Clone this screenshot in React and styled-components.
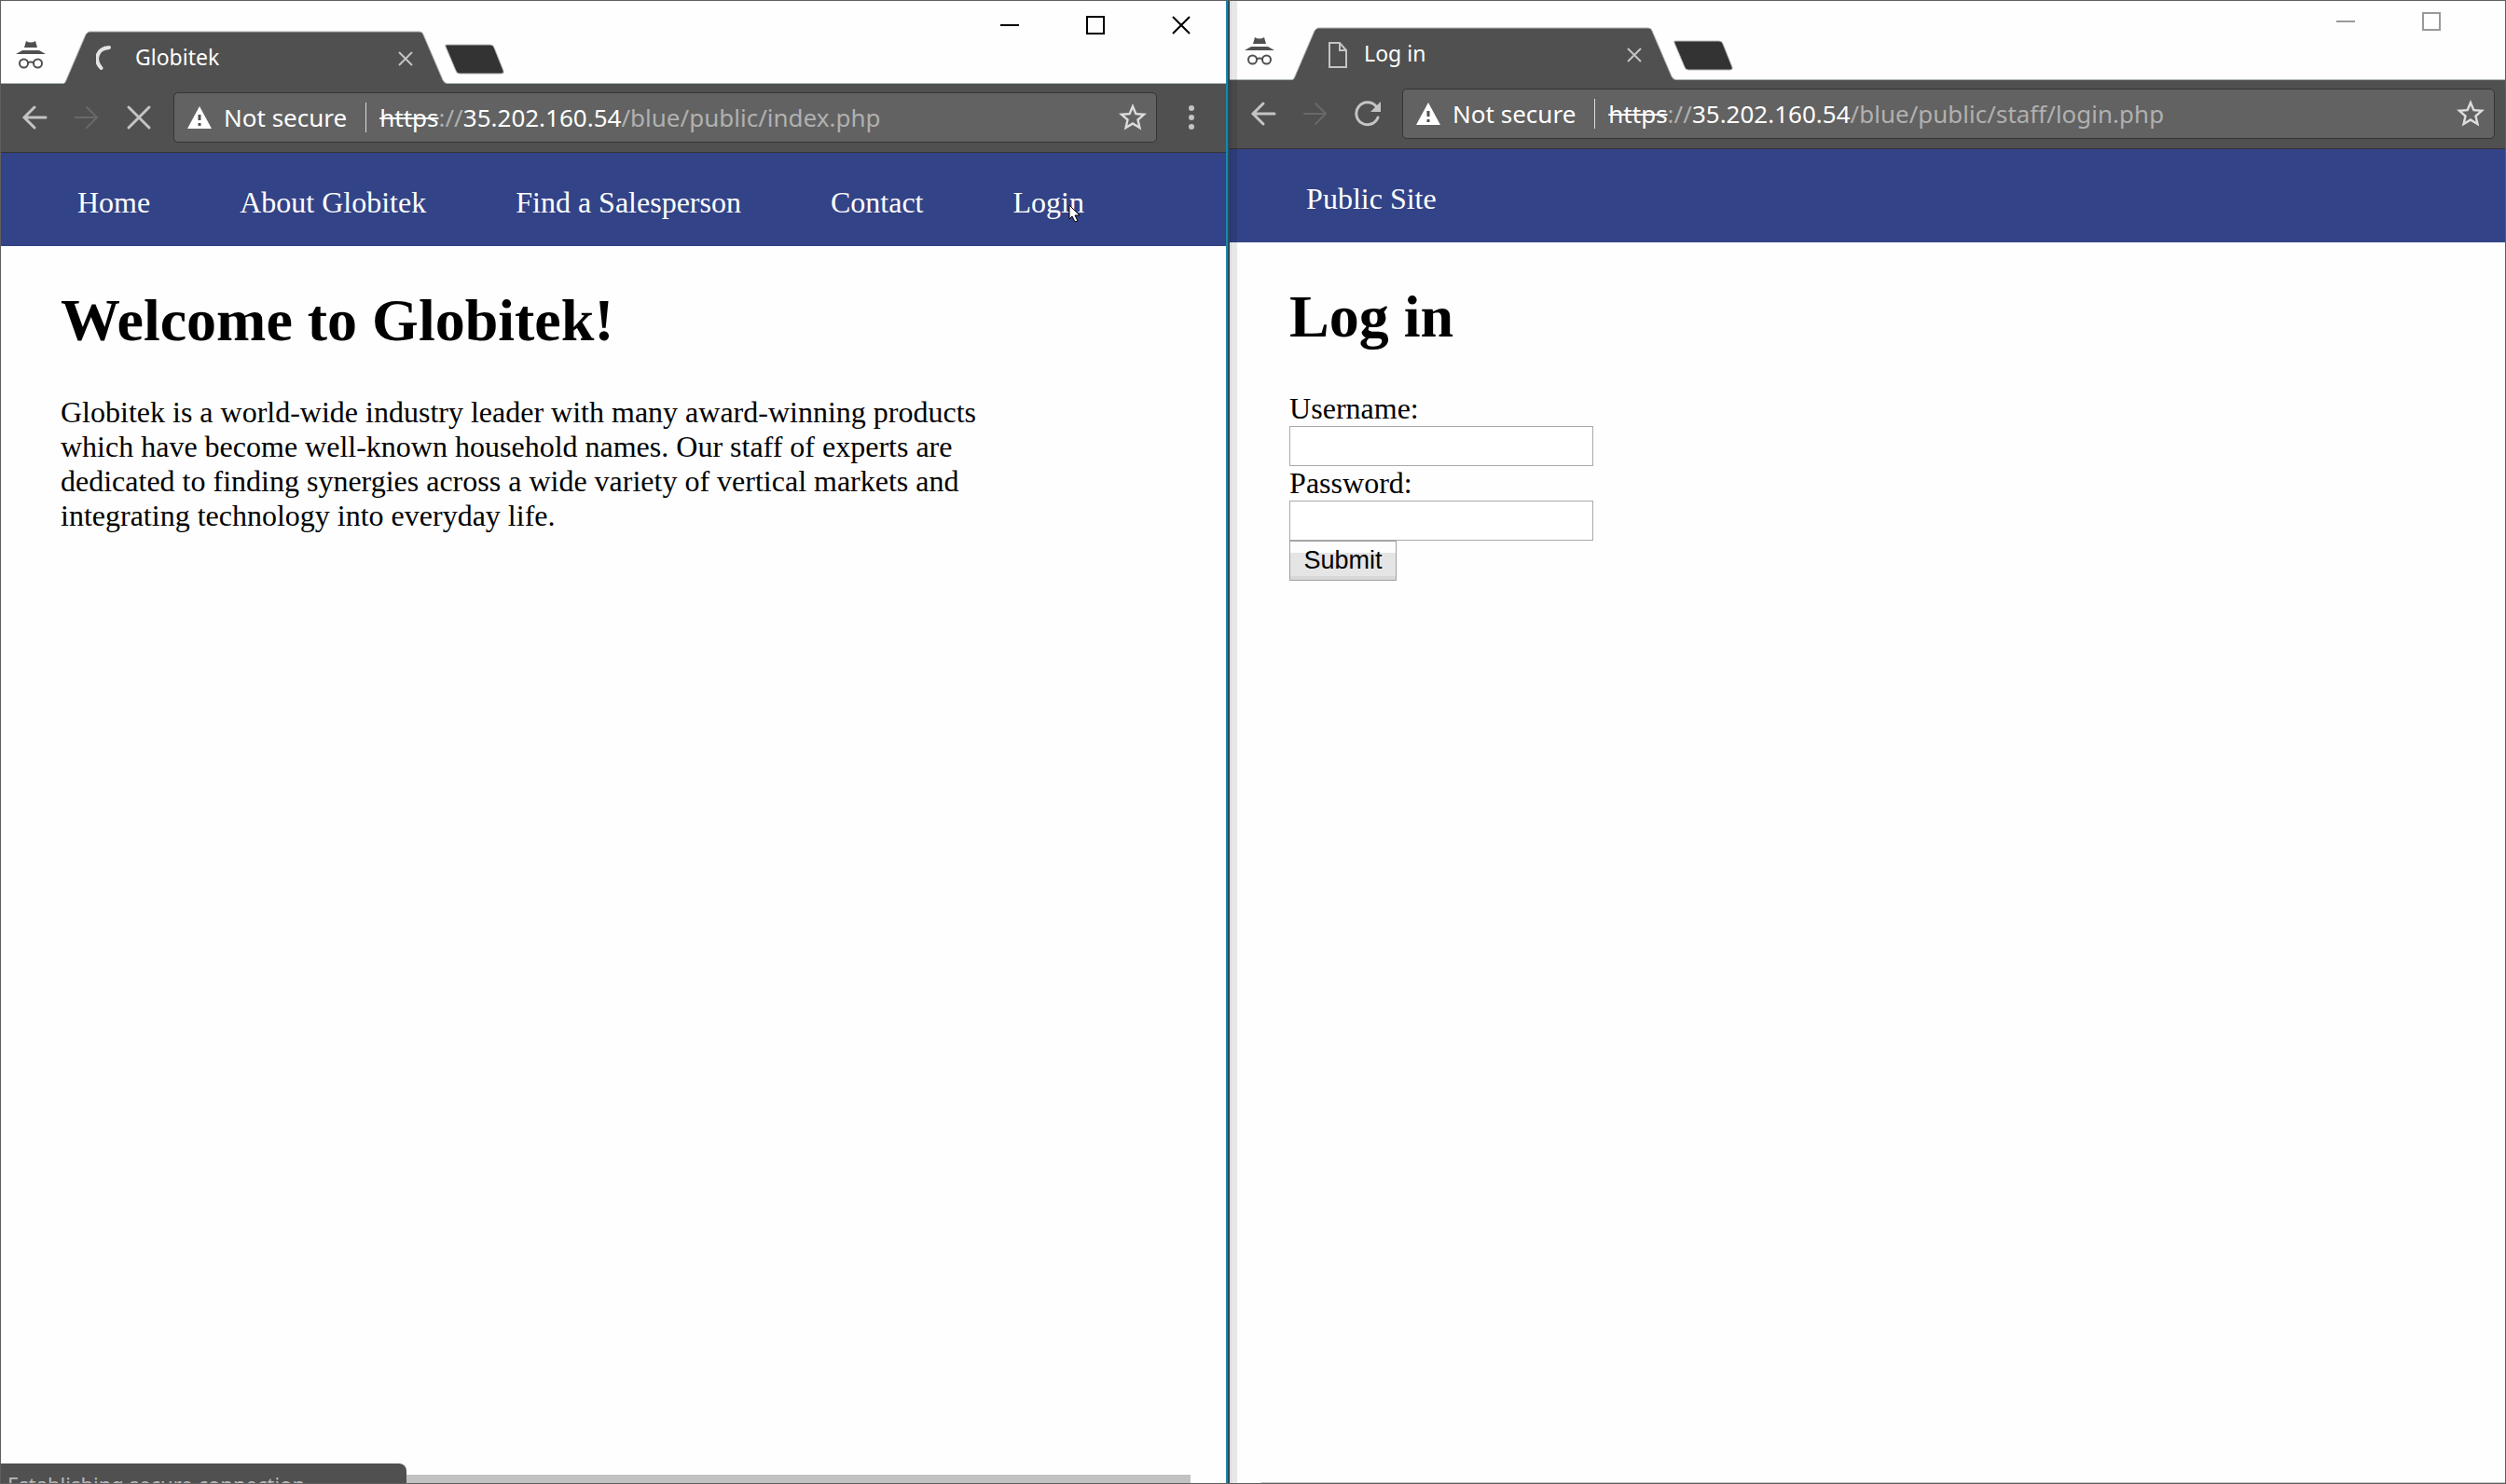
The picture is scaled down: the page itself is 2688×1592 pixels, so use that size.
import React from 'react';
import styled, { createGlobalStyle, css } from 'styled-components';

const UI = '"Noto Sans", "Open Sans", sans-serif';
const SERIF = '"Liberation Serif", "Times New Roman", serif';

const GlobalStyle = createGlobalStyle`
  *, *::before, *::after { box-sizing: border-box; }
  body { margin: 0; background: #fefefe; font-family: ${SERIF}; font-size: 32px; line-height: 37px; color: #000; overflow: hidden; }
`;

const Desktop = styled.div`
  display: grid;
  grid-template-columns: 49fr 51fr;
  height: 100vh;
  border-top: 1px solid #5f5f5f;
  border-bottom: 1px solid #5f5f5f;
`;

const Window = styled.section`
  position: relative;
  display: flex;
  flex-direction: column;
  min-width: 0;
  min-height: 0;
  background: #fefefe;
  ${({ $active }) => $active ? css`
    border-left: 1px solid #5f5f5f;
    border-right: 2px solid #1a87ab;
  ` : css`
    border-left: 2px solid #244c5c;
    border-right: 1px solid #5f5f5f;
  `}
`;

const EdgeShadow = styled.div`
  position: absolute;
  left: 0;
  top: 0;
  bottom: 0;
  width: 8px;
  background: rgba(0, 0, 0, 0.09);
  border-left: 2px solid rgba(0, 0, 0, 0.05);
`;

const TabStrip = styled.header`
  display: flex;
  height: ${({ $active }) => ($active ? 89 : 85)}px;
  align-items: flex-end;
  background: linear-gradient(#aab4b0, #aab4b0) bottom / 100% 1px no-repeat;
`;

const IncognitoBadge = styled.svg`
  width: 34px;
  height: 32px;
  margin: 0 18px 15px 15px;
  flex: none;
`;

const Tab = styled.div`
  position: relative;
  display: flex;
  align-items: center;
  width: 412px;
  height: 57px;
  padding: 2px 37px 0 35px;
  color: #fff;
  font: 23px/32px ${UI};
`;

const TabShape = styled.svg`
  position: absolute;
  inset: 0;
  width: 100%;
  height: 100%;
`;

const TabIcon = styled.svg`
  position: relative;
  width: 24px;
  height: 30px;
  margin-right: 18px;
  flex: none;
`;

const TabTitle = styled.span`
  position: relative;
  flex: 1;
  padding-bottom: 3px;
`;

const IconButton = styled.button`
  position: relative;
  display: flex;
  align-items: center;
  justify-content: center;
  width: ${({ $w }) => $w}px;
  height: ${({ $h }) => $h || 28}px;
  padding: 0;
  border: 0;
  background: none;
  flex: none;
`;

const NewTab = styled(IconButton)`
  margin: 0 auto 10px -5px;
`;

const Controls = styled.div`
  display: flex;
  align-self: flex-start;
  padding-right: ${({ $active }) => ($active ? 2 : 0)}px;
`;

const Toolbar = styled.div`
  display: flex;
  align-items: center;
  height: 74px;
  padding: 0 ${({ $menu }) => ($menu ? 0 : 11)}px 2px 8px;
  background: #505050;
  border-bottom: 1px solid #333;
`;

const Omnibox = styled.div`
  display: flex;
  flex: 1;
  align-items: center;
  height: 54px;
  min-width: 0;
  margin-left: 9px;
  padding: 0 7px 0 14px;
  background: #626262;
  border: 1px solid #343434;
  border-radius: 5px;
  color: #fff;
  font: 26px/38px ${UI};
`;

const Warning = styled.svg`
  width: 26px;
  height: 24px;
  margin-right: 13px;
  flex: none;
`;

const Security = styled.span`
  padding-right: 20px;
  white-space: nowrap;
`;

const Url = styled.span`
  flex: 1;
  padding-left: 15px;
  color: #b0b0b0;
  white-space: nowrap;
  background: linear-gradient(#dcdcdc, #dcdcdc) left / 1px 32px no-repeat;
  b { font-weight: 400; color: #fff; }
  s { color: #fff; text-decoration-thickness: 2px; }
`;

const Nav = styled.nav`
  background: #334387;
  height: 100px;
  padding: 6px 82px 0;
  display: flex;
  align-items: center;
  gap: 96px;
  a { color: #fff; text-decoration: none; white-space: nowrap; }
`;

const NavTarget = styled.span`
  position: relative;
  display: flex;
`;

const Pointer = styled.svg`
  position: absolute;
  left: 60px;
  top: 20px;
  width: 14px;
  height: 20px;
`;

const Content = styled.main`
  flex: 1;
  padding: 43px 64px 0;
`;

const Title = styled.h1`
  margin: 0 0 43px;
  font-size: 64px;
  line-height: 74px;
  white-space: nowrap;
`;

const Intro = styled.p`
  margin: 0;
  max-width: 1000px;
`;

const Form = styled.form`
  display: flex;
  flex-direction: column;
  align-items: flex-start;
`;

const Field = styled.input`
  width: 326px;
  height: 43px;
  border: 1px solid #a9a9a9;
  border-radius: 0;
  background: #fff;
  padding: 2px 4px;
  font: 27px "Liberation Sans", Arial, sans-serif;
`;

const Submit = styled.button`
  width: 115px;
  height: 43px;
  padding: 0 0 1px;
  border: 1px solid #a0a0a0;
  border-radius: 0;
  background: linear-gradient(#fdfdfd 12px, #e5e5e5 12px, #e5e5e5 37px, #d8d8d8 37px);
  font: 27px/32px "Liberation Sans", Arial, sans-serif;
  color: #000;
`;

const Bottom = styled.footer`
  display: flex;
  align-items: flex-end;
  overflow: hidden;
  height: ${({ $h }) => $h}px;
`;

const Status = styled.output`
  width: 435px;
  height: 21px;
  padding: 6px 7px 0;
  overflow: hidden;
  background: #505050;
  border-top-right-radius: 8px;
  color: #b8b8b8;
  font: 22px/32px ${UI};
  white-space: nowrap;
`;

const ScrollThumb = styled.div`
  flex: 1;
  height: 9px;
  margin-right: 38px;
  background: #c1c1c1;
`;

const ThinThumb = styled(ScrollThumb)`
  height: 1px;
  margin: 0 0 0 34px;
`;

function Incognito() {
  return (
    <IncognitoBadge viewBox="0 0 34 32" aria-hidden="true">
      <path d="M12 1q5 3 10 0l2 7H10zM1 15l7-4h18l7 4z" fill="#505050" />
      <g fill="none" stroke="#505050" strokeWidth="2">
        <circle cx="9.500" cy="25" r="4.500" /><circle cx="24.500" cy="25" r="4.500" />
        <path d="M14 24q3-1 6 0" />
      </g>
    </IncognitoBadge>
  );
}

function Chrome({ active, title, url, loading, menu, children }) {
  const ctl = active ? '#000' : '#999';
  const controlHeight = active ? 52 : 44;
  return (
    <Window $active={active}>
      <TabStrip $active={active}>
        <Incognito />
        <Tab>
          <TabShape viewBox="0 0 412 57" preserveAspectRatio="none" aria-hidden="true">
            <path d="M0 57C2 56 2 55 3 53L24 4Q26 1 28 1H382Q385 1 386 4L407 53Q409 57 412 57Z" fill="#505050" />
            <path d="M0 56.500C2 56 2 55 3 53L24 4Q26 1 28 1H382Q385 1 386 4L407 53Q409 56.500 412 56.500" fill="none" stroke="#aab4b0" />
          </TabShape>
          <TabIcon viewBox="0 0 24 30" aria-hidden="true">
            {loading
              ? <path d="M14 3C0 4-2 17 5.500 25" fill="none" stroke="#e4e4e4" strokeWidth="4" strokeLinecap="round" />
              : <path d="M5 2h11l7 8v18H5zM16 2v8h7" fill="none" stroke="#c4c4c4" strokeWidth="2" />}
          </TabIcon>
          <TabTitle>{title}</TabTitle>
          <IconButton $w={16} aria-label="Close tab">
            <svg width="16" height="18" viewBox="0 0 16 18"><path d="M1 2l14 14M15 2L1 16" stroke="#c4c4c4" strokeWidth="2" /></svg>
          </IconButton>
        </Tab>
        <NewTab $w={68} $h={34} aria-label="New tab">
          <svg width="68" height="34" viewBox="0 0 68 34">
            <path d="M4 2h47q3 0 4 3l10 25q1 3-2 3H18q-3 0-4-3L3 4q-1-2 1-2z" fill="#333" stroke="#b8b8b8" />
          </svg>
        </NewTab>
        <Controls $active={active}>
          <IconButton $w={92} $h={controlHeight} aria-label="Minimize">
            <svg width="20" height="20"><path d="M0 10h20" stroke={ctl} strokeWidth="2" /></svg>
          </IconButton>
          <IconButton $w={92} $h={controlHeight} aria-label="Maximize">
            <svg width="20" height="20"><path d="M1 1h18v18H1z" fill="none" stroke={ctl} strokeWidth="2" /></svg>
          </IconButton>
          <IconButton $w={active ? 92 : 33} $h={controlHeight} aria-label="Close">
            {active && <svg width="20" height="20"><path d="M1 1l18 18M19 1L1 19" stroke={ctl} strokeWidth="2" /></svg>}
          </IconButton>
        </Controls>
      </TabStrip>
      <Toolbar $menu={menu}>
        <IconButton $w={56} aria-label="Back">
          <svg width="28" height="28"><path d="M26 14H4M14 3L3 14l11 11" fill="none" stroke="#c4c4c4" strokeWidth="3" strokeLinecap="round" /></svg>
        </IconButton>
        <IconButton $w={56} aria-label="Forward">
          <svg width="28" height="28"><path d="M2 14h22M14 3l11 11-11 11" fill="none" stroke="#696969" strokeWidth="2" strokeLinecap="round" /></svg>
        </IconButton>
        <IconButton $w={56} aria-label={loading ? 'Stop' : 'Reload'}>
          {loading
            ? <svg width="28" height="28"><path d="M3 3l22 22M25 3L3 25" stroke="#c4c4c4" strokeWidth="3" strokeLinecap="round" /></svg>
            : <svg width="28" height="28"><path d="M23 6A12 12 0 1 0 25 18" fill="none" stroke="#c4c4c4" strokeWidth="3" strokeLinecap="round" /><path d="M28 1v11H17z" fill="#c4c4c4" /></svg>}
        </IconButton>
        <Omnibox>
          <Warning viewBox="0 0 26 24" aria-hidden="true">
            <path d="M13 0l13 24H0z" fill="#fff" /><path d="M13 9v6M13 18v3" stroke="#505050" strokeWidth="3" />
          </Warning>
          <Security>Not secure</Security>
          <Url><s>https</s>://<b>35.202.160.54</b>{url}</Url>
          <IconButton $w={36} $h={36} aria-label="Bookmark">
            <svg width="36" height="36" viewBox="0 0 24 24"><path d="M22 9.240l-7.190-.620L12 2 9.190 8.630 2 9.240l5.460 4.730L5.820 21 12 17.270 18.180 21l-1.630-7.030zM12 15.400l-3.760 2.270 1-4.280-3.320-2.880 4.380-.380L12 6.100l1.710 4.040 4.380.380-3.320 2.880 1 4.280z" fill="#dcdcdc" /></svg>
          </IconButton>
        </Omnibox>
        {menu && (
          <IconButton $w={74} $h={30} aria-label="Menu">
            <svg width="8" height="28"><g fill="#c4c4c4"><circle cx="4" cy="4" r="3" /><circle cx="4" cy="14" r="3" /><circle cx="4" cy="24" r="3" /></g></svg>
          </IconButton>
        )}
      </Toolbar>
      {children}
    </Window>
  );
}

export default function App() {
  return (
    <Desktop>
      <GlobalStyle />
      <Chrome active loading menu title="Globitek" url="/blue/public/index.php">
        <Nav>
          <a href="#home">Home</a>
          <a href="#about">About Globitek</a>
          <a href="#find">Find a Salesperson</a>
          <a href="#contact">Contact</a>
          <NavTarget>
            <a href="#login">Login</a>
            <Pointer viewBox="0 0 14 20" aria-hidden="true">
              <path d="M1 1v15l3-3 3 6 3-1-3-6h5z" fill="#fff" stroke="#000" />
            </Pointer>
          </NavTarget>
        </Nav>
        <Content>
          <Title>Welcome to Globitek!</Title>
          <Intro>
            Globitek is a world-wide industry leader with many award-winning products which have become
            well-known household names. Our staff of experts are dedicated to finding synergies across a
            wide variety of vertical markets and integrating technology into everyday life.
          </Intro>
        </Content>
        <Bottom $h={21}>
          <Status>Establishing secure connection...</Status>
          <ScrollThumb />
        </Bottom>
      </Chrome>
      <Chrome title="Log in" url="/blue/public/staff/login.php">
        <Nav><a href="#public">Public Site</a></Nav>
        <Content>
          <Title>Log in</Title>
          <Form>
            <label htmlFor="user">Username:</label>
            <Field id="user" type="text" />
            <label htmlFor="pass">Password:</label>
            <Field id="pass" type="password" />
            <Submit type="button">Submit</Submit>
          </Form>
        </Content>
        <Bottom $h={1}><ThinThumb /></Bottom>
        <EdgeShadow />
      </Chrome>
    </Desktop>
  );
}
